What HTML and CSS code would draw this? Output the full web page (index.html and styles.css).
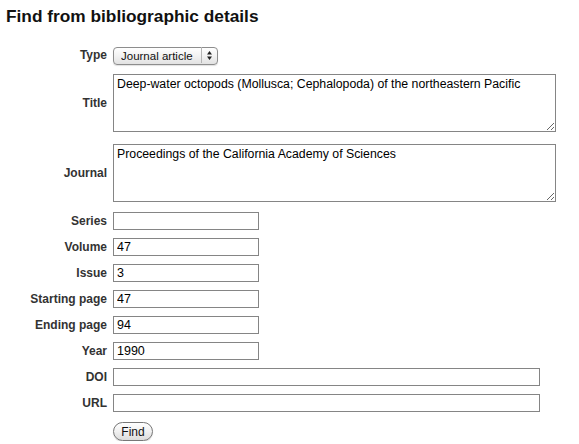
FILE: index.html
```html
<!DOCTYPE html>
<html>
<head>
<meta charset="utf-8">
<title>Find from bibliographic details</title>
<link rel="stylesheet" href="styles.css">
</head>
<body>
<h1 class="title">Find from bibliographic details</h1>
<form class="form">
  <label class="label">Type</label>
  <div class="field">
    <span class="select-wrap">
      <select class="select"><option>Journal article</option></select>
      <span class="select-arrows"><svg width="7" height="11" viewBox="0 0 7 11"><path d="M3.5 1 L6 4.5 H1 Z M3.5 10 L6 6.5 H1 Z" fill="#222"/></svg></span>
    </span>
  </div>

  <label class="label">Title</label>
  <div class="field"><textarea class="area">Deep-water octopods (Mollusca; Cephalopoda) of the northeastern Pacific</textarea></div>

  <label class="label">Journal</label>
  <div class="field"><textarea class="area">Proceedings of the California Academy of Sciences</textarea></div>

  <label class="label">Series</label>
  <div class="field"><input class="text short" type="text" value=""></div>

  <label class="label">Volume</label>
  <div class="field"><input class="text short" type="text" value="47"></div>

  <label class="label">Issue</label>
  <div class="field"><input class="text short" type="text" value="3"></div>

  <label class="label">Starting page</label>
  <div class="field"><input class="text short" type="text" value="47"></div>

  <label class="label">Ending page</label>
  <div class="field"><input class="text short" type="text" value="94"></div>

  <label class="label">Year</label>
  <div class="field"><input class="text short" type="text" value="1990"></div>

  <label class="label">DOI</label>
  <div class="field"><input class="text long" type="text" value=""></div>

  <label class="label">URL</label>
  <div class="field"><input class="text long" type="text" value=""></div>

  <span class="label"></span>
  <div class="field"><button class="button" type="button">Find</button></div>
</form>
</body>
</html>
```
FILE: styles.css
```css
html, body {
  margin: 0;
  padding: 0;
  background: #ffffff;
}

body {
  font-family: "Liberation Sans", Arial, sans-serif;
  color: #222;
}

.title {
  margin: 0;
  padding: 6px 6px 0;
  font-size: 17.3px;
  line-height: 20px;
  font-weight: bold;
  color: #111;
}

.form {
  display: grid;
  grid-template-columns: 107px auto;
  column-gap: 6px;
  row-gap: 8px;
  margin-top: 20px;
  align-items: center;
}

.label {
  text-align: right;
  font-size: 12px;
  font-weight: bold;
  color: #333;
  line-height: 14px;
}

.field {
  display: flex;
  align-items: center;
}

.select-wrap {
  position: relative;
  display: inline-block;
  width: 105px;
  height: 18px;
}

.select {
  appearance: none;
  -webkit-appearance: none;
  width: 105px;
  height: 18px;
  margin: 0;
  padding: 0 0 0 7px;
  border: 1px solid #8d8d8d;
  border-radius: 4px;
  background: linear-gradient(#ffffff, #f2f2f2 50%, #e2e2e2);
  font-family: "Liberation Sans", Arial, sans-serif;
  font-size: 11.5px;
  color: #111;
  line-height: 16px;
  box-shadow: 0 1px 1px rgba(0,0,0,0.12);
}

.select-arrows {
  position: absolute;
  top: 1px;
  right: 1px;
  width: 15px;
  height: 16px;
  border-left: 1px solid #b5b5b5;
  display: flex;
  align-items: center;
  justify-content: center;
  pointer-events: none;
}

.area {
  box-sizing: border-box;
  width: 443px;
  height: 58px;
  margin: 2px 0;
  padding: 2px 3px;
  border: 1px solid #858585;
  font-family: "Liberation Sans", Arial, sans-serif;
  font-size: 12.3px;
  line-height: 15px;
  color: #000;
  resize: both;
}

.text {
  box-sizing: border-box;
  height: 18px;
  margin: 0;
  padding: 0 3px;
  border: 1px solid #858585;
  font-family: "Liberation Sans", Arial, sans-serif;
  font-size: 12.5px;
  color: #000;
  background: #fff;
}

.short {
  width: 146px;
}

.long {
  width: 427px;
}

.button {
  margin-top: 2px;
  height: 19px;
  width: 40px;
  padding: 0;
  border: 1px solid #777;
  border-radius: 10px;
  background: linear-gradient(#ffffff, #f0f0f0 50%, #dcdcdc);
  font-family: "Liberation Sans", Arial, sans-serif;
  font-size: 12px;
  color: #111;
  box-shadow: 0 1px 1px rgba(0,0,0,0.15);
}
```
